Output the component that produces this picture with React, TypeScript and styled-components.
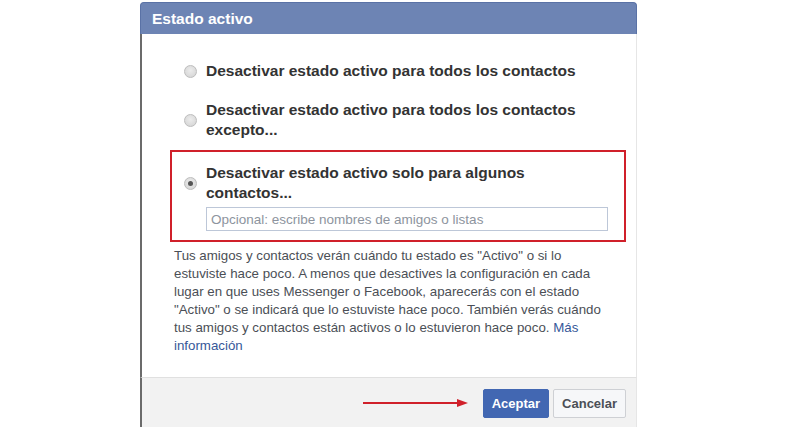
import React from "react";
import styled, { createGlobalStyle } from "styled-components";

const GlobalStyle = createGlobalStyle`
  html, body {
    margin: 0;
    padding: 0;
    background: #fff;
    font-family: "Liberation Sans", Arial, Helvetica, sans-serif;
    overflow: hidden;
  }
`;

const Page = styled.div`
  width: 806px;
  height: 427px;
  overflow: hidden;
  padding: 2px 0 0 140px;
  box-sizing: border-box;
`;

const Dialog = styled.div`
  width: 497px;
  display: flex;
  flex-direction: column;
`;

const Header = styled.div`
  height: 32px;
  box-sizing: border-box;
  background: #6d84b4;
  border: 1px solid #5a72a6;
  border-bottom: none;
  border-radius: 4px 4px 0 0;
  color: #fff;
  font-size: 15.5px;
  font-weight: bold;
  display: flex;
  align-items: center;
  padding-left: 11px;
`;

const Body = styled.div`
  background: #fff;
  border-left: 2px solid #6b6b6b;
  border-right: 1px solid #e6e6e6;
  padding: 27px 10px 22px 28px;
  display: flex;
  flex-direction: column;
`;

const Option = styled.label<{ $gap?: number; $inset?: number }>`
  display: flex;
  align-items: center;
  gap: 9px;
  padding-left: ${({ $inset }) => $inset ?? 14}px;
  margin-bottom: ${({ $gap }) => $gap ?? 0}px;
`;

const OptionText = styled.span`
  width: 395px;
  font-size: 15.5px;
  font-weight: bold;
  line-height: 20px;
  color: #333;
`;

const Radio = styled.span<{ $checked?: boolean }>`
  width: 13px;
  height: 13px;
  flex: none;
  border-radius: 50%;
  box-sizing: border-box;
  border: 1px solid #bdbdbd;
  background: radial-gradient(circle at 50% 40%, #ececec 0%, #d2d2d2 100%);
  position: relative;

  &::after {
    content: "";
    display: ${({ $checked }) => ($checked ? "block" : "none")};
    position: absolute;
    left: 3px;
    top: 3px;
    width: 5px;
    height: 5px;
    border-radius: 50%;
    background: #555;
  }
`;

const Highlight = styled.div`
  border: 2px solid #d0202a;
  padding: 11px 16px 9px 12px;
  display: flex;
  flex-direction: column;
  gap: 4px;
`;

const Field = styled.div`
  margin-left: 22px;
  height: 24px;
  box-sizing: border-box;
  border: 1px solid #bdc7d8;
  display: flex;
  align-items: center;
  padding-left: 4px;
  font-size: 13.5px;
  color: #8d949e;
`;

const Note = styled.p`
  margin: 5px 0 0 0;
  padding-left: 4px;
  width: 440px;
  font-size: 13.3px;
  line-height: 18px;
  color: #4b4f56;
`;

const Link = styled.a`
  color: #365899;
  text-decoration: none;
`;

const Footer = styled.div`
  height: 50px;
  background: #f2f2f2;
  border-top: 1px solid #e0e0e0;
  border-left: 2px solid #6b6b6b;
  border-right: 1px solid #e6e6e6;
  display: flex;
  align-items: flex-start;
  justify-content: flex-end;
  padding: 11px 10px 0 0;
  gap: 4px;
`;

const Arrow = styled.svg`
  margin: 9px 10px 0 0;
`;

const Button = styled.button<{ $primary?: boolean }>`
  height: 29px;
  padding: 0 8px;
  font-family: inherit;
  font-size: 13px;
  font-weight: bold;
  border-radius: 2px;
  border: 1px solid ${({ $primary }) => ($primary ? "#4267b2" : "#ced0d4")};
  background: ${({ $primary }) => ($primary ? "#4267b2" : "#f6f7f9")};
  color: ${({ $primary }) => ($primary ? "#fff" : "#4b4f56")};
`;

export default function App() {
  return (
    <Page>
      <GlobalStyle />
      <Dialog>
        <Header>Estado activo</Header>
        <Body>
          <Option $gap={19}>
            <Radio />
            <OptionText>Desactivar estado activo para todos los contactos</OptionText>
          </Option>
          <Option $gap={10}>
            <Radio />
            <OptionText>Desactivar estado activo para todos los contactos excepto...</OptionText>
          </Option>
          <Highlight>
            <Option $inset={0}>
              <Radio $checked />
              <OptionText>Desactivar estado activo solo para algunos contactos...</OptionText>
            </Option>
            <Field>Opcional: escribe nombres de amigos o listas</Field>
          </Highlight>
          <Note>
            Tus amigos y contactos verán cuándo tu estado es "Activo" o si lo
            estuviste hace poco. A menos que desactives la configuración en cada
            lugar en que uses Messenger o Facebook, aparecerás con el estado
            "Activo" o se indicará que lo estuviste hace poco. También verás cuándo
            tus amigos y contactos están activos o lo estuvieron hace poco.{" "}
            <Link href="#">Más información</Link>
          </Note>
        </Body>
        <Footer>
          <Arrow width="106" height="10" viewBox="0 0 106 10">
            <line x1="0" y1="5" x2="96" y2="5" stroke="#d0202a" strokeWidth="2" />
            <polygon points="94,1 105,5 94,9" fill="#d0202a" />
          </Arrow>
          <Button $primary>Aceptar</Button>
          <Button>Cancelar</Button>
        </Footer>
      </Dialog>
    </Page>
  );
}
